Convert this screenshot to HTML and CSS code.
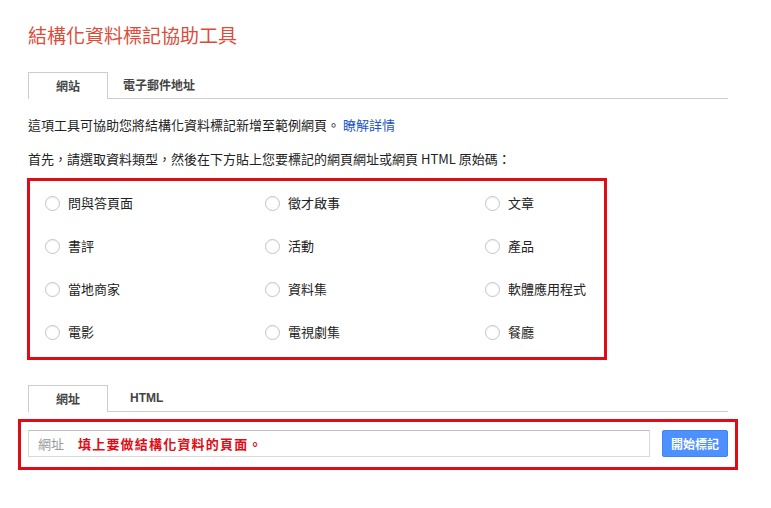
FILE: index.html
```html
<!DOCTYPE html>
<html lang="zh-Hant">
<head>
<meta charset="utf-8">
<title>結構化資料標記協助工具</title>
<link rel="stylesheet" href="styles.css">
</head>
<body>
<div class="page">
  <h1 class="title">結構化資料標記協助工具</h1>

  <div class="tabs">
    <div class="tab active">網站</div>
    <div class="tab plain">電子郵件地址</div>
  </div>

  <p class="intro">這項工具可協助您將結構化資料標記新增至範例網頁。 <a class="link" href="#">瞭解詳情</a></p>
  <p class="step">首先，請選取資料類型，然後在下方貼上您要標記的網頁網址或網頁 HTML 原始碼：</p>

  <div class="types">
    <label class="opt"><span class="radio"></span>問與答頁面</label>
    <label class="opt"><span class="radio"></span>徵才啟事</label>
    <label class="opt"><span class="radio"></span>文章</label>
    <label class="opt"><span class="radio"></span>書評</label>
    <label class="opt"><span class="radio"></span>活動</label>
    <label class="opt"><span class="radio"></span>產品</label>
    <label class="opt"><span class="radio"></span>當地商家</label>
    <label class="opt"><span class="radio"></span>資料集</label>
    <label class="opt"><span class="radio"></span>軟體應用程式</label>
    <label class="opt"><span class="radio"></span>電影</label>
    <label class="opt"><span class="radio"></span>電視劇集</label>
    <label class="opt"><span class="radio"></span>餐廳</label>
  </div>

  <div class="tabs tabs2">
    <div class="tab active">網址</div>
    <div class="tab plain html">HTML</div>
  </div>

  <div class="urlrow">
    <div class="input"><span class="ph">網址</span><span class="note">填上要做結構化資料的頁面。</span></div>
    <button class="btn">開始標記</button>
  </div>
</div>
</body>
</html>
```

FILE: styles.css
```css
html, body {
  margin: 0;
  padding: 0;
  background: #fff;
}
body {
  font-family: "Noto Sans CJK TC", "Liberation Sans", Arial, sans-serif;
  color: #222;
}
.page {
  margin-left: 28px;
  width: 700px;
}
.title {
  margin: 0;
  padding-top: 23px;
  font-size: 19px;
  line-height: 24px;
  font-weight: normal;
  color: #dd4b39;
}
.tabs {
  display: flex;
  margin-top: 25px;
  height: 26px;
  border-bottom: 1px solid #ccc;
}
.tab {
  box-sizing: border-box;
  height: 27px;
  font-size: 12px;
  line-height: 26px;
  font-weight: bold;
  color: #444;
}
.tab.active {
  width: 80px;
  text-align: center;
  background: #fff;
  border: 1px solid #ccc;
  border-bottom: none;
  position: relative;
  z-index: 1;
}
.tab.plain {
  padding: 0 15px;
}
.tab.html {
  padding: 0 22px;
  font-family: "Liberation Sans", Arial, sans-serif;
}
.intro {
  margin: 16px 0 0;
  font-size: 13px;
  line-height: 20px;
}
.link {
  color: #1a55c4;
  text-decoration: none;
}
.step {
  margin: 14px 0 0;
  font-size: 13px;
  line-height: 20px;
}
.types {
  box-sizing: border-box;
  margin: 9px 0 0 -1px;
  width: 580px;
  height: 182px;
  border: 3px solid #e00b14;
  padding: 0 0 0 15px;
  display: grid;
  grid-template-columns: 220px 220px 120px;
  grid-auto-rows: 43px;
}
.opt {
  display: flex;
  align-items: center;
  gap: 8px;
  font-size: 13px;
  color: #222;
}
.radio {
  box-sizing: border-box;
  width: 15px;
  height: 15px;
  border-radius: 50%;
  border: 1px solid #c4c4c4;
  background: #fff;
  box-shadow: inset 0 1px 1px rgba(0,0,0,0.06);
  margin-top: 2px;
}
.tabs2 {
  margin-top: 25px;
}
.urlrow {
  box-sizing: border-box;
  margin: 7px 0 0 -10px;
  width: 720px;
  height: 51px;
  border: 3px solid #e00b14;
  padding: 8px 7px 0 7px;
  display: flex;
  gap: 12px;
}
.input {
  box-sizing: border-box;
  width: 622px;
  height: 27px;
  border: 1px solid #d9d9d9;
  border-top-color: #c0c0c0;
  background: #fff;
  display: flex;
  align-items: center;
  padding-left: 9px;
}
.ph {
  font-size: 13px;
  color: #999;
  width: 40px;
}
.note {
  font-size: 13px;
  font-weight: bold;
  color: #e00b14;
  letter-spacing: 1.2px;
}
.btn {
  box-sizing: border-box;
  width: 66px;
  height: 27px;
  border: 1px solid #3d84f5;
  border-radius: 2px;
  background: #4d90fe;
  color: #fff;
  font-family: "Noto Sans CJK TC", sans-serif;
  font-size: 12px;
  font-weight: bold;
  padding: 0;
}
```
